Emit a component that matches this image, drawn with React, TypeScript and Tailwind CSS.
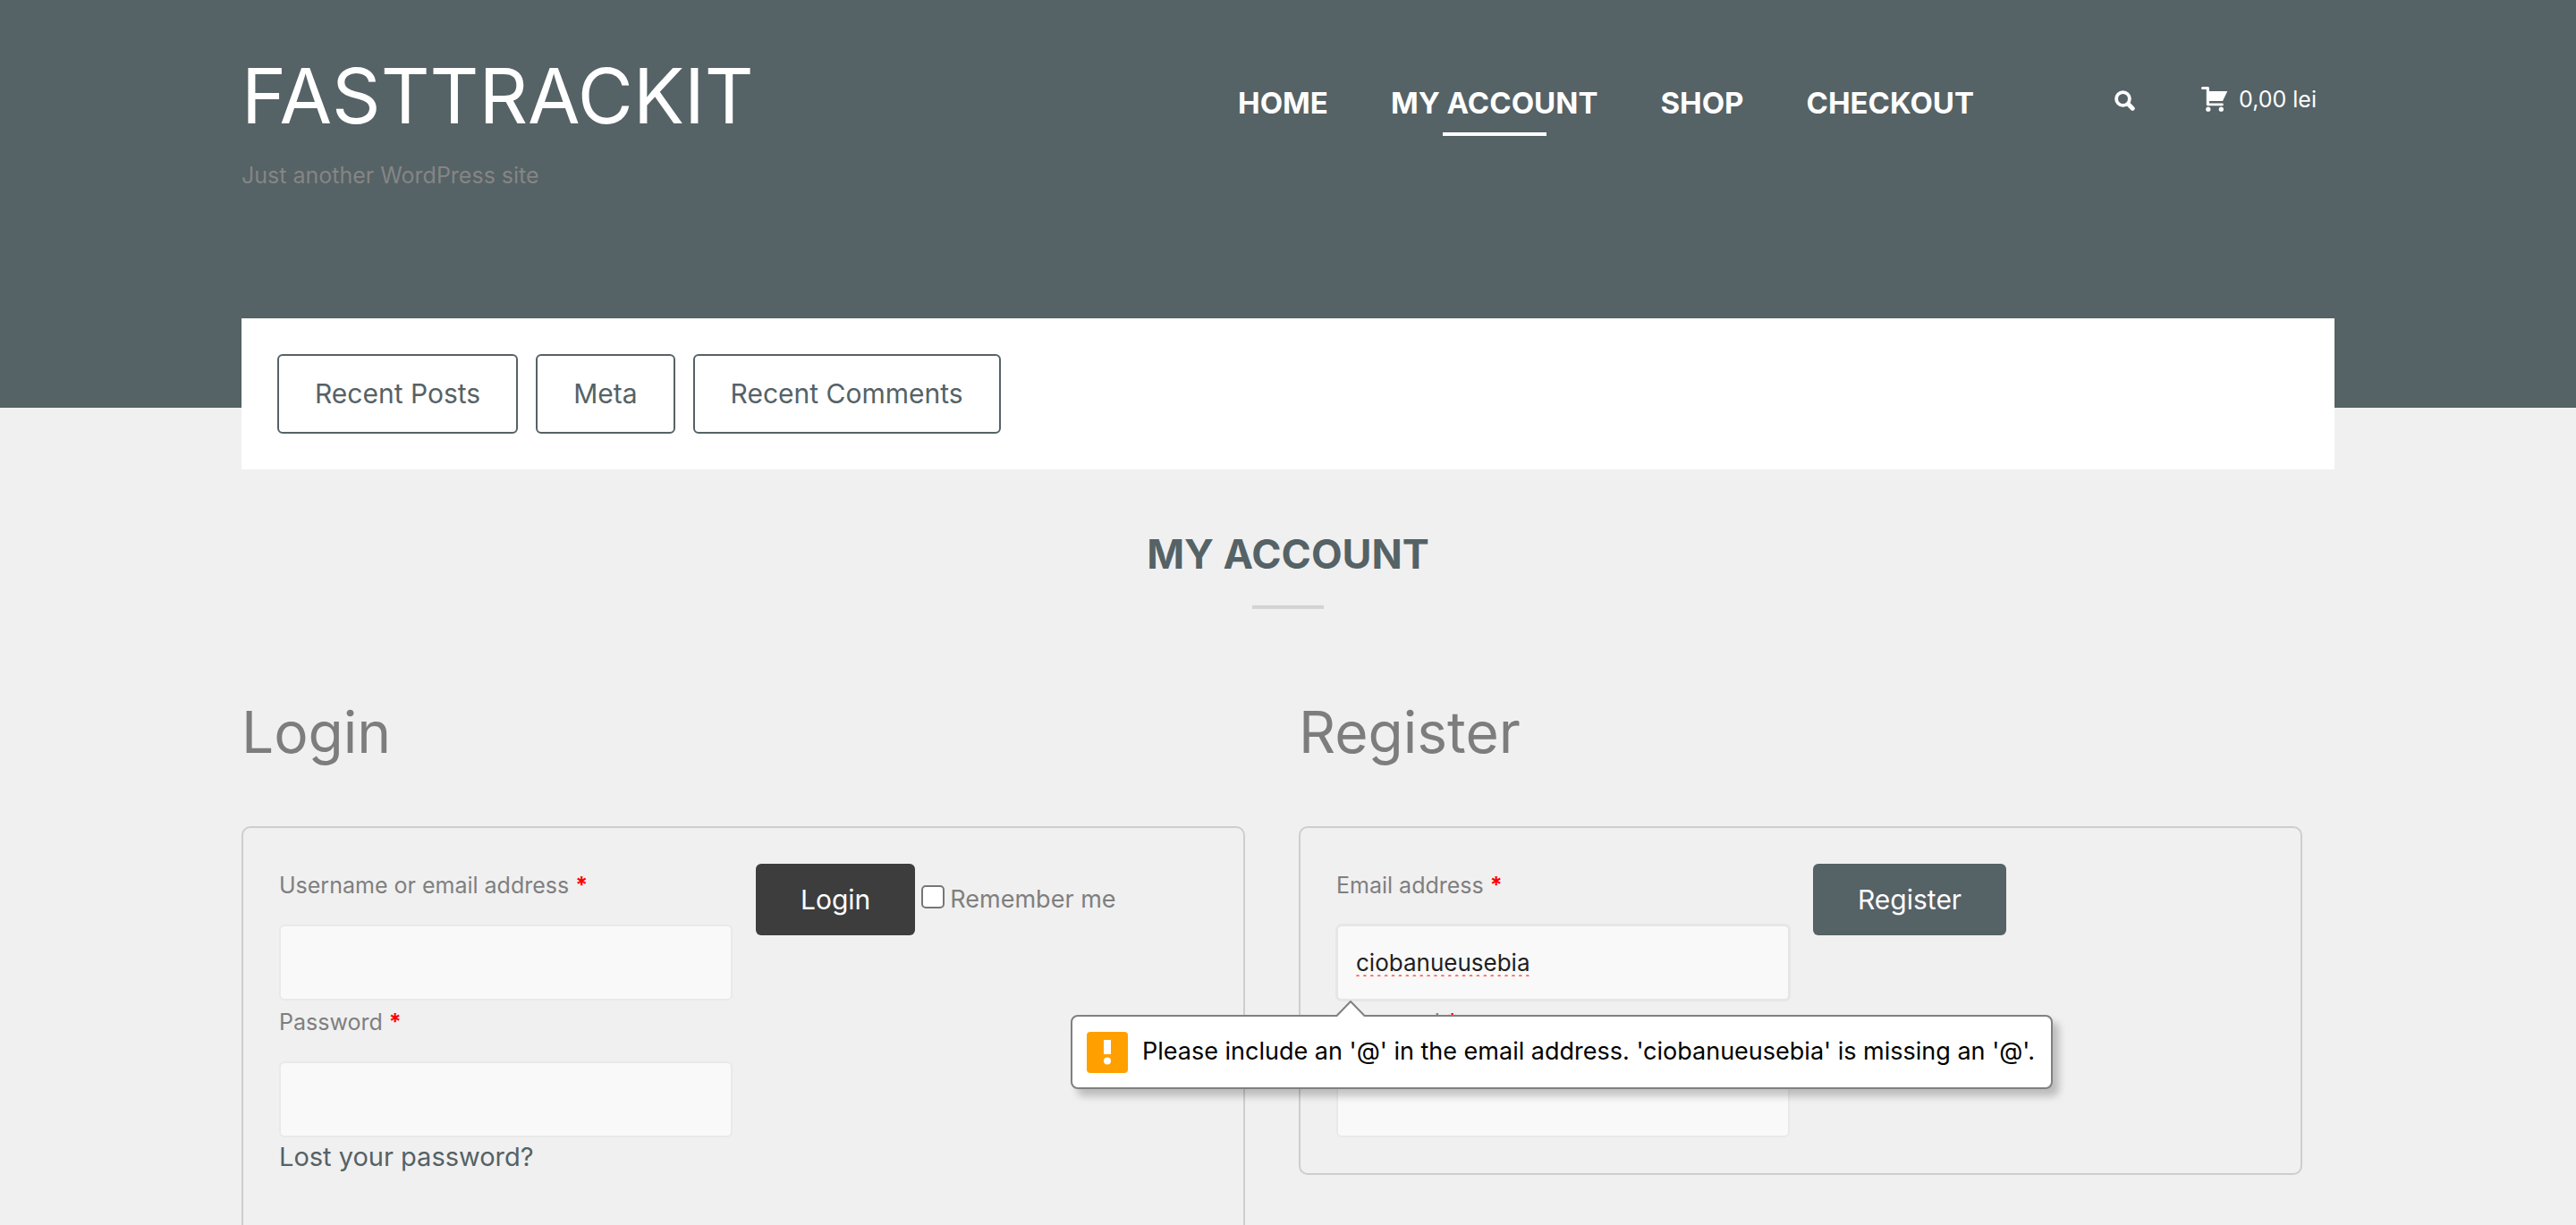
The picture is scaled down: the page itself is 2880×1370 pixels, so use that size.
import React, { type ReactNode } from "react";

const navLinks = ["HOME", "MY ACCOUNT", "SHOP", "CHECKOUT"];
const widgets = ["Recent Posts", "Meta", "Recent Comments"];

function SearchIcon() {
  return (
    <svg viewBox="0 0 24 24" className="size-6" fill="none" stroke="currentColor" aria-hidden="true">
      <circle cx="10.5" cy="10.5" r="7.4" strokeWidth="3.8" />
      <path d="M16.5 16.5 L21.2 21.2" strokeWidth="5" strokeLinecap="round" />
    </svg>
  );
}

function CartIcon() {
  return (
    <svg viewBox="0 0 30 28" className="h-7 w-[30px]" fill="currentColor" aria-hidden="true">
      <path d="M1.5 0H7.5Q9 0 9 1.5V5H29.3L24 16H9V18.6H23.5Q24.8 18.6 24.8 20T23.5 21.3H7.2Q5.8 21.3 5.8 20V3H1.5Q0 3 0 1.5T1.5 0Z" />
      <circle cx="7.8" cy="25.2" r="2.6" />
      <circle cx="22.3" cy="25.2" r="2.6" />
    </svg>
  );
}

function Field({
  id,
  label,
  type,
  value,
  focused = false,
  children,
}: {
  id: string;
  label: string;
  type: string;
  value?: string;
  focused?: boolean;
  children?: ReactNode;
}) {
  return (
    <div>
      <label htmlFor={id} className="mb-5 block text-[25px] leading-[48px] text-[#7f7f7f]">
        {label} <span className="font-bold text-[#ff0000]">*</span>
      </label>
      <div className="relative">
        <input
          id={id}
          type={type}
          defaultValue={value}
          spellCheck={false}
          className={
            focused
              ? "block h-[85px] w-full rounded-md border-2 border-[#e6e6e6] bg-[#f9f9f9] px-5 text-[26px] text-[#1f1f1f] underline decoration-[#ff6a60] decoration-dotted decoration-4 underline-offset-4 shadow-[0_0_0_1px_#e6e6e6] outline-none [text-decoration-skip-ink:none]"
              : "block h-[85px] w-full rounded-md border-2 border-[#e9e9e9] bg-[#f9f9f9] px-5 text-[26px] text-[#1f1f1f] outline-none"
          }
        />
        {children}
      </div>
    </div>
  );
}

function ValidationBubble() {
  return (
    <div role="alert" className="absolute top-[101px] -left-[297px] z-10">
      <div className="flex h-[83px] items-center gap-4 rounded-lg border-2 border-[#808080] bg-white pr-[18px] pl-4 text-[27px] whitespace-nowrap text-black shadow-[7px_8px_8px_rgba(0,0,0,0.22)]">
        <svg viewBox="0 0 46 46" className="size-[46px] shrink-0" aria-hidden="true">
          <rect width="46" height="46" rx="4" fill="#ffa000" />
          <rect x="19" y="9" width="8" height="16" fill="#fff" />
          <circle cx="23" cy="32.5" r="4" fill="#fff" />
        </svg>
        <span>Please include an '@' in the email address. 'ciobanueusebia' is missing an '@'.</span>
      </div>
      <svg viewBox="0 0 34 19" className="absolute -top-4 left-[296px] h-[19px] w-[34px]" aria-hidden="true">
        <path d="M1 18 L17 1 L33 18 V19 H1Z" fill="#fff" />
        <path d="M1 17.5 L17 1 L33 17.5" fill="none" stroke="#808080" strokeWidth="2" />
      </svg>
    </div>
  );
}

export default function App() {
  return (
    <div className="min-h-screen bg-[#f0f0f0] font-[Inter,'Open_Sans',sans-serif]">
      <header className="bg-[#556266] pt-14 pb-60 text-white">
        <div className="mx-auto flex w-[81.25%] items-start justify-between">
          <div>
            <a href="#home" className="block text-[85px] leading-[104px]">
              FASTTRACKIT
            </a>
            <p className="mt-4 text-[25px] leading-10 text-[#858585]">Just another WordPress site</p>
          </div>
          <div className="flex items-start pr-5">
            <nav aria-label="Main" className="mt-[35px] mr-[156px]">
              <ul className="flex gap-[70px] text-[33px] leading-[48px] font-bold">
                {navLinks.map((name) => (
                  <li key={name}>
                    <a href="#nav" className="block">
                      {name}
                      {name === "MY ACCOUNT" && <span className="mx-auto mt-[9px] block h-1 w-1/2 bg-white" />}
                    </a>
                  </li>
                ))}
              </ul>
            </nav>
            <button type="button" aria-label="Search" className="mt-11 mr-[74px]">
              <SearchIcon />
            </button>
            <a href="#cart" className="mt-[37px] flex items-center gap-3 text-[25px] leading-9">
              <CartIcon />
              0,00 lei
            </a>
          </div>
        </div>
      </header>

      <main className="mx-auto w-[81.25%]">
        <div className="-mt-[100px] flex gap-5 bg-white p-10">
          {widgets.map((name) => (
            <button
              key={name}
              type="button"
              className="h-[89px] rounded-md border-2 border-[#556266] px-10 text-[30px] text-[#556266]"
            >
              {name}
            </button>
          ))}
        </div>

        <h1 className="mt-[65px] text-center text-[45px] leading-[60px] font-bold text-[#556266]">MY ACCOUNT</h1>
        <div className="mx-auto mt-[27px] h-1 w-20 bg-[#d3d3d3]" />

        <div className="mt-[98px] grid grid-cols-2 items-start gap-15 pr-9">
          <section>
            <h2 className="text-[64px] leading-[80px] text-[#7d7d7d]">Login</h2>
            <form className="mt-[65px] flex items-start rounded-[10px] border-2 border-[#d0ccd0] p-10 pb-24">
              <div className="mr-[26px] w-[507px]">
                <Field id="username" label="Username or email address" type="text" />
                <Field id="password" label="Password" type="password" />
                <a href="#lost" className="block text-[29px] leading-11 text-[#556266]">
                  Lost your password?
                </a>
              </div>
              <button type="button" className="h-20 rounded-md bg-[#3d3d3d] px-[50px] text-[30px] text-white">
                Login
              </button>
              <label className="ml-[7px] flex h-20 items-center gap-1.5 text-[27px] text-[#7f7f7f]">
                <input
                  type="checkbox"
                  className="mb-1.5 size-[26px] appearance-none rounded-[5px] border-2 border-[#767676] bg-white"
                />
                Remember me
              </label>
            </form>
          </section>

          <section>
            <h2 className="text-[64px] leading-[80px] text-[#7d7d7d]">Register</h2>
            <form className="mt-[65px] flex items-start rounded-[10px] border-2 border-[#d0ccd0] p-10">
              <div className="mr-[26px] w-[507px]">
                <Field id="reg-email" label="Email address" type="text" value="ciobanueusebia" focused>
                  <ValidationBubble />
                </Field>
                <Field id="reg-password" label="Password" type="password" />
              </div>
              <button type="button" className="h-20 rounded-md bg-[#556266] px-[50px] text-[30px] text-white">
                Register
              </button>
            </form>
          </section>
        </div>
      </main>
    </div>
  );
}
